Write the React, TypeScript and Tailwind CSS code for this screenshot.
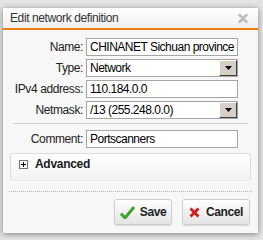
import React from "react";

const font = { fontFamily: '"Liberation Sans", Arial, sans-serif' };

function Row({ label, children }: { label: string; children: React.ReactNode }) {
  return (
    <div className="flex items-center h-[18px]">
      <label className="w-[83px] pr-[3px] text-right text-[12px] tracking-[-0.4px] text-[#222]">{label}</label>
      {children}
    </div>
  );
}

function TextBox({ value }: { value: string }) {
  return (
    <div className="w-[152px] h-[18px] bg-white border border-[#a5a5a5] px-[3px] flex items-center text-[12px] tracking-[-0.5px] text-black whitespace-nowrap overflow-hidden">
      {value}
    </div>
  );
}

function SelectBox({ value }: { value: string }) {
  return (
    <div className="w-[152px] h-[18px] bg-white border border-[#a5a5a5] pl-[3px] flex items-center text-[12px] tracking-[-0.5px] text-black">
      <span className="flex-1">{value}</span>
      <span className="w-[18px] h-[16px] bg-[#d4d0c8] border border-t-white border-l-white border-r-[#404040] border-b-[#404040] flex items-center justify-center">
        <svg width="7" height="4" viewBox="0 0 7 4">
          <path d="M0 0h7L3.5 4z" fill="#000" />
        </svg>
      </span>
    </div>
  );
}

export default function App() {
  return (
    <div style={font} className="w-[263px] h-[240px] bg-[#e4e4e4] pt-[8px] pl-[3px] overflow-hidden">
      <div className="w-[255px] h-[225px] bg-[#f7f7f7] shadow-[0_1px_6px_rgba(0,0,0,0.45)] flex flex-col">
        <div className="h-[20px] bg-gradient-to-b from-white to-[#f0f0f0] flex items-center justify-between pl-[7px] pr-[10px]">
          <span className="text-[12px] tracking-[-0.4px] text-[#333]">Edit network definition</span>
          <svg width="10" height="9" viewBox="0 0 10 9">
            <path d="M1.5 1l7 7M8.5 1l-7 7" stroke="#bdbdbd" strokeWidth="2.6" strokeLinecap="round" />
          </svg>
        </div>
        <div className="h-[2px] bg-[#f07f0a]" />
        <div className="flex flex-col pt-[8px]">
          <div className="flex flex-col gap-[3px]">
            <Row label="Name:"><TextBox value="CHINANET Sichuan province" /></Row>
            <Row label="Type:"><SelectBox value="Network" /></Row>
            <Row label="IPv4 address:"><TextBox value="110.184.0.0" /></Row>
            <Row label="Netmask:"><SelectBox value="/13 (255.248.0.0)" /></Row>
          </div>
          <div className="mx-[10px] mt-[4px] border-t border-[#cfcfcf]" />
          <div className="mt-[6px]">
            <Row label="Comment:"><TextBox value="Portscanners" /></Row>
          </div>
          <div className="mx-[7px] mt-[5px] h-[28px] rounded-[4px] border border-[#dcdcdc] border-b-[#ececec] bg-gradient-to-b from-white to-[#f3f3f3] flex items-center h-[28px] pl-[8px] pb-[6px]">
            <span className="w-[9px] h-[9px] border border-[#777] bg-white flex items-center justify-center">
              <svg width="5" height="5" viewBox="0 0 5 5">
                <path d="M0 2.5h5M2.5 0v5" stroke="#000" strokeWidth="1" />
              </svg>
            </span>
            <span className="ml-[7px] text-[12px] leading-[12px] font-bold tracking-[-0.3px] text-[#1a1a1a]">Advanced</span>
          </div>
          <div className="mx-[6px] mt-[10px] border-t border-dotted border-[#b5b5b5]" />
          <div className="flex justify-end gap-[10px] pr-[8px] mt-[7px]">
            <button className="w-[58px] h-[26px] rounded-[3px] border border-[#cfcfcf] bg-gradient-to-b from-white to-[#e4e4e4] shadow-[0_1px_1px_rgba(0,0,0,0.15)] flex items-center justify-center gap-[5px] text-[12px] font-bold tracking-[-0.4px] text-[#222]">
              <svg width="15" height="13" viewBox="0 0 15 13">
                <path d="M1 7.5l4 4.5 9-11" fill="none" stroke="#43a32f" strokeWidth="3" strokeLinejoin="round" />
              </svg>
              Save
            </button>
            <button className="w-[68px] h-[26px] rounded-[3px] border border-[#cfcfcf] bg-gradient-to-b from-white to-[#e4e4e4] shadow-[0_1px_1px_rgba(0,0,0,0.15)] flex items-center justify-center gap-[6px] text-[12px] font-bold tracking-[-0.4px] text-[#222]">
              <svg width="11" height="11" viewBox="0 0 11 11">
                <path d="M1.5 1.5l8 8M9.5 1.5l-8 8" stroke="#d01c1c" strokeWidth="2.8" />
              </svg>
              Cancel
            </button>
          </div>
        </div>
      </div>
    </div>
  );
}
